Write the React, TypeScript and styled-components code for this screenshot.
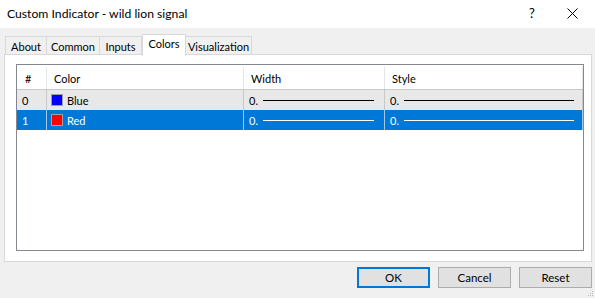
import React from 'react';
import styled, { createGlobalStyle } from 'styled-components';

const GlobalStyle = createGlobalStyle`
  html, body {
    margin: 0;
    padding: 0;
    background: #f0f0f0;
  }
  body {
    font-family: Lato, "Liberation Sans", sans-serif;
    font-size: 11px;
    color: #000;
  }
`;

const Window = styled.div`
  position: relative;
  width: 595px;
  height: 298px;
  display: flex;
  flex-direction: column;
  background: #f0f0f0;
  overflow: hidden;
`;

const TitleBar = styled.div`
  height: 28px;
  display: flex;
  align-items: center;
  background: #fff;
  padding-left: 7px;
  box-sizing: border-box;
`;

const TitleText = styled.div`
  flex: 1;
  font-size: 12.2px;
  padding-bottom: 2px;
`;

const TitleButton = styled.div<{ $w: number }>`
  width: ${(p) => p.$w}px;
  height: 28px;
  display: flex;
  align-items: center;
  justify-content: center;
  font-size: 13px;
  padding-bottom: 2px;
  box-sizing: border-box;
`;

const Body = styled.div`
  flex: 1;
  display: flex;
  flex-direction: column;
  padding: 6px 4px 0 4px;
`;

const TabStrip = styled.div`
  display: flex;
  align-items: flex-end;
  height: 21px;
  padding-left: 1px;
  position: relative;
  z-index: 1;
  margin-bottom: -1px;
`;

const Tab = styled.div<{ $w: number; $active?: boolean }>`
  width: ${(p) => p.$w}px;
  height: ${(p) => (p.$active ? 22 : 19)}px;
  box-sizing: border-box;
  border: 1px solid #d9d9d9;
  border-bottom: ${(p) => (p.$active ? 'none' : '1px solid #d9d9d9')};
  border-left: ${(p) => (p.$active ? '1px solid #d9d9d9' : 'none')};
  background: ${(p) => (p.$active ? '#fff' : '#f0f0f0')};
  display: flex;
  align-items: center;
  justify-content: center;
  padding-top: ${(p) => (p.$active ? 0 : 2)}px;
  padding-bottom: ${(p) => (p.$active ? 4 : 0)}px;
  margin-bottom: ${(p) => (p.$active ? -1 : 0)}px;
  &:first-child {
    border-left: 1px solid #d9d9d9;
  }
`;

const Panel = styled.div`
  width: 588px;
  height: 208px;
  box-sizing: border-box;
  background: #fff;
  border: 1px solid #d9d9d9;
  padding: 9px 0 0 11px;
`;

const ListView = styled.div`
  width: 568px;
  height: 187px;
  box-sizing: border-box;
  border: 1px solid #828790;
  background: #fff;
`;

const Row = styled.div<{ $kind: 'head' | 'hover' | 'selected' }>`
  display: grid;
  grid-template-columns: 30px 197px 141px 198px;
  height: ${(p) => (p.$kind === 'head' ? 25 : 20)}px;
  box-sizing: border-box;
  background: ${(p) =>
    p.$kind === 'head' ? '#fff' : p.$kind === 'hover' ? '#e8e8e8' : '#0078d7'};
  color: ${(p) => (p.$kind === 'selected' ? '#fff' : '#000')};
  border-bottom: ${(p) => (p.$kind === 'head' ? '1px solid #c8c8c8' : 'none')};
  padding-top: ${(p) => (p.$kind === 'head' ? 2 : 0)}px;
`;

const Cell = styled.div<{ $pad: number; $sep: string }>`
  display: flex;
  align-items: center;
  padding-left: ${(p) => p.$pad}px;
  border-right: 1px solid ${(p) => p.$sep};
  min-width: 0;
`;

const Swatch = styled.span<{ $color: string }>`
  width: 10px;
  height: 10px;
  border: 1px solid #a0a0a0;
  background: ${(p) => p.$color};
  margin-right: 4px;
  flex: none;
`;

const StyleLine = styled.span<{ $color: string; $right: number }>`
  flex: 1;
  height: 1px;
  background: ${(p) => p.$color};
  margin-left: 5px;
  margin-right: ${(p) => p.$right}px;
`;

const Footer = styled.div`
  display: flex;
  justify-content: flex-end;
  gap: 8px;
  padding-top: 5px;
  margin-right: -1px;
`;

const Button = styled.div<{ $default?: boolean }>`
  width: 73px;
  height: 21px;
  box-sizing: border-box;
  background: #e1e1e1;
  border: ${(p) => (p.$default ? '2px solid #0078d7' : '1px solid #adadad')};
  display: flex;
  align-items: center;
  justify-content: center;
  font-size: 11.5px;
`;

const Grip = styled.svg`
  position: absolute;
  right: 1px;
  bottom: 1px;
`;

const tabs = [
  { label: 'About', w: 42 },
  { label: 'Common', w: 53 },
  { label: 'Inputs', w: 42 },
  { label: 'Colors', w: 44, active: true },
  { label: 'Visualization', w: 66 },
];

const buffers = [
  { id: '0', name: 'Blue', color: '#0000ff', kind: 'hover' as const },
  { id: '1', name: 'Red', color: '#ff0000', kind: 'selected' as const },
];

const App: React.FC = () => {
  return (
    <Window>
      <GlobalStyle />
      <TitleBar>
        <TitleText>Custom Indicator - wild lion signal</TitleText>
        <TitleButton $w={34}>?</TitleButton>
        <TitleButton $w={46}>
          <svg width="11" height="11" viewBox="0 0 11 11">
            <path d="M0.5 0.5 L10.5 10.5 M10.5 0.5 L0.5 10.5" stroke="#000" strokeWidth="1" />
          </svg>
        </TitleButton>
      </TitleBar>
      <Body>
        <TabStrip>
          {tabs.map((t) => (
            <Tab key={t.label} $w={t.w} $active={t.active}>
              {t.label}
            </Tab>
          ))}
        </TabStrip>
        <Panel>
          <ListView>
            <Row $kind="head">
              <Cell $pad={8} $sep="#e5e5e5">#</Cell>
              <Cell $pad={7} $sep="#e5e5e5">Color</Cell>
              <Cell $pad={7} $sep="#e5e5e5">Width</Cell>
              <Cell $pad={7} $sep="#e5e5e5">Style</Cell>
            </Row>
            {buffers.map((b) => {
              const sep = b.kind === 'selected' ? '#a6c8e8' : '#c8c8c8';
              const fg = b.kind === 'selected' ? '#fff' : '#000';
              return (
                <Row key={b.id} $kind={b.kind}>
                  <Cell $pad={5} $sep={sep}>{b.id}</Cell>
                  <Cell $pad={4} $sep={sep}>
                    <Swatch $color={b.color} />
                    {b.name}
                  </Cell>
                  <Cell $pad={5} $sep={sep}>
                    0.
                    <StyleLine $color={fg} $right={10} />
                  </Cell>
                  <Cell $pad={5} $sep={sep}>
                    0.
                    <StyleLine $color={fg} $right={8} />
                  </Cell>
                </Row>
              );
            })}
          </ListView>
        </Panel>
        <Footer>
          <Button $default>OK</Button>
          <Button>Cancel</Button>
          <Button>Reset</Button>
        </Footer>
      </Body>
      <Grip width="6" height="6" viewBox="0 0 6 6">
        <rect x="4" y="0" width="1" height="1" fill="#b8b8b8" />
        <rect x="2" y="2" width="1" height="1" fill="#b8b8b8" />
        <rect x="4" y="2" width="1" height="1" fill="#b8b8b8" />
        <rect x="0" y="4" width="1" height="1" fill="#b8b8b8" />
        <rect x="2" y="4" width="1" height="1" fill="#b8b8b8" />
        <rect x="4" y="4" width="1" height="1" fill="#b8b8b8" />
      </Grip>
    </Window>
  );
};

export default App;
